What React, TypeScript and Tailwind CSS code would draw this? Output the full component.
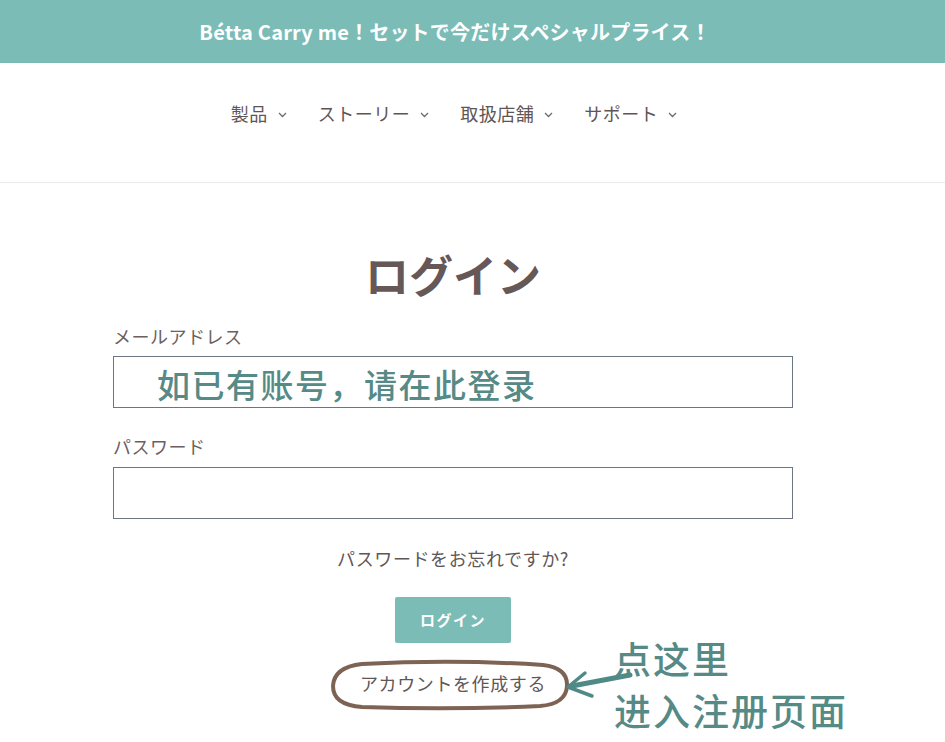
import React from "react";

const jp = { fontFamily: '"Noto Sans CJK JP", "Noto Sans", sans-serif' };
const sc = { fontFamily: '"Noto Sans CJK SC", "Noto Sans", sans-serif' };

function Chevron() {
  return (
    <svg width="9" height="6" viewBox="0 0 9 6" className="ml-[10px] mt-[3px]">
      <path d="M1 1 L4.5 4.5 L8 1" fill="none" stroke="#6f6a6a" strokeWidth="1.3" />
    </svg>
  );
}

export default function App() {
  const nav = ["製品", "ストーリー", "取扱店舗", "サポート"];
  return (
    <div className="relative w-[945px] min-h-[742px] bg-white overflow-hidden" style={jp}>
      <div className="h-[63px] bg-[#7bbcb7] w-full">
        <div className="w-[910px] h-full flex items-center justify-center text-white font-bold text-[20px] tracking-[0.2px]">
          Bétta Carry me！セットで今だけスペシャルプライス！
        </div>
      </div>
      <div className="w-full h-[120px] border-b border-[#ebebeb]">
        <nav className="w-[908px] pt-[38px] flex items-center justify-center gap-[31px] text-[#5f5555] text-[18px] leading-[24px] tracking-[0.5px]">
          {nav.map((n) => (
            <div key={n} className="flex items-center">
              <span>{n}</span>
              <Chevron />
            </div>
          ))}
        </nav>
      </div>
      <main className="w-[906px]">
        <div className="w-[680px] mx-auto flex flex-col">
          <h1 className="mt-[63px] text-center text-[44px] leading-[56px] font-bold text-[#675858]">ログイン</h1>
          <label className="mt-[22px] text-[18px] leading-[24px] tracking-[0.5px] text-[#6b5f5f]">メールアドレス</label>
          <div className="mt-[8px] h-[52px] border border-[#6b7681]" />
          <label className="mt-[26px] text-[18px] leading-[24px] tracking-[0.5px] text-[#6b5f5f]">パスワード</label>
          <div className="mt-[9px] h-[52px] border border-[#6b7681]" />
          <p className="mt-[27px] text-center text-[18px] leading-[24px] tracking-[0.6px] text-[#5f5757]">パスワードをお忘れですか?</p>
          <div className="mt-[27px] flex justify-center">
            <button className="w-[116px] h-[46px] bg-[#7bbcb7] rounded-[2px] text-white font-bold text-[15px] tracking-[1.5px]">ログイン</button>
          </div>
          <p className="mt-[28px] text-center text-[18px] leading-[24px] tracking-[0.6px] text-[#5f5757]">アカウントを作成する</p>
        </div>
      </main>

      {/* annotations */}
      <div className="absolute left-[157px] top-[364px] text-[33px] leading-[40px] font-medium tracking-[1.5px] text-[#568a86]" style={sc}>
        如已有账号，请在此登录
      </div>
      <div className="absolute left-[614px] top-[632px] text-[37px] leading-[52px] font-medium tracking-[2px] text-[#568a86]" style={sc}>
        <div>点这里</div>
        <div>进入注册页面</div>
      </div>
      <svg className="absolute left-0 top-0 pointer-events-none" width="945" height="742">
        <path
          d="M362 664 Q455 659 543 665 Q568 668 567 686 Q566 704 540 706 Q452 710 362 707 Q333 705 333 686 Q334 667 362 664 Z"
          fill="none"
          stroke="#7d6354"
          strokeWidth="4"
        />
        <path d="M630 675 L572 686" stroke="#4f8a86" strokeWidth="5" strokeLinecap="round" fill="none" />
        <path d="M585 673 L568 687 L592 696" stroke="#4f8a86" strokeWidth="3.5" strokeLinecap="round" strokeLinejoin="round" fill="none" />
      </svg>
    </div>
  );
}
